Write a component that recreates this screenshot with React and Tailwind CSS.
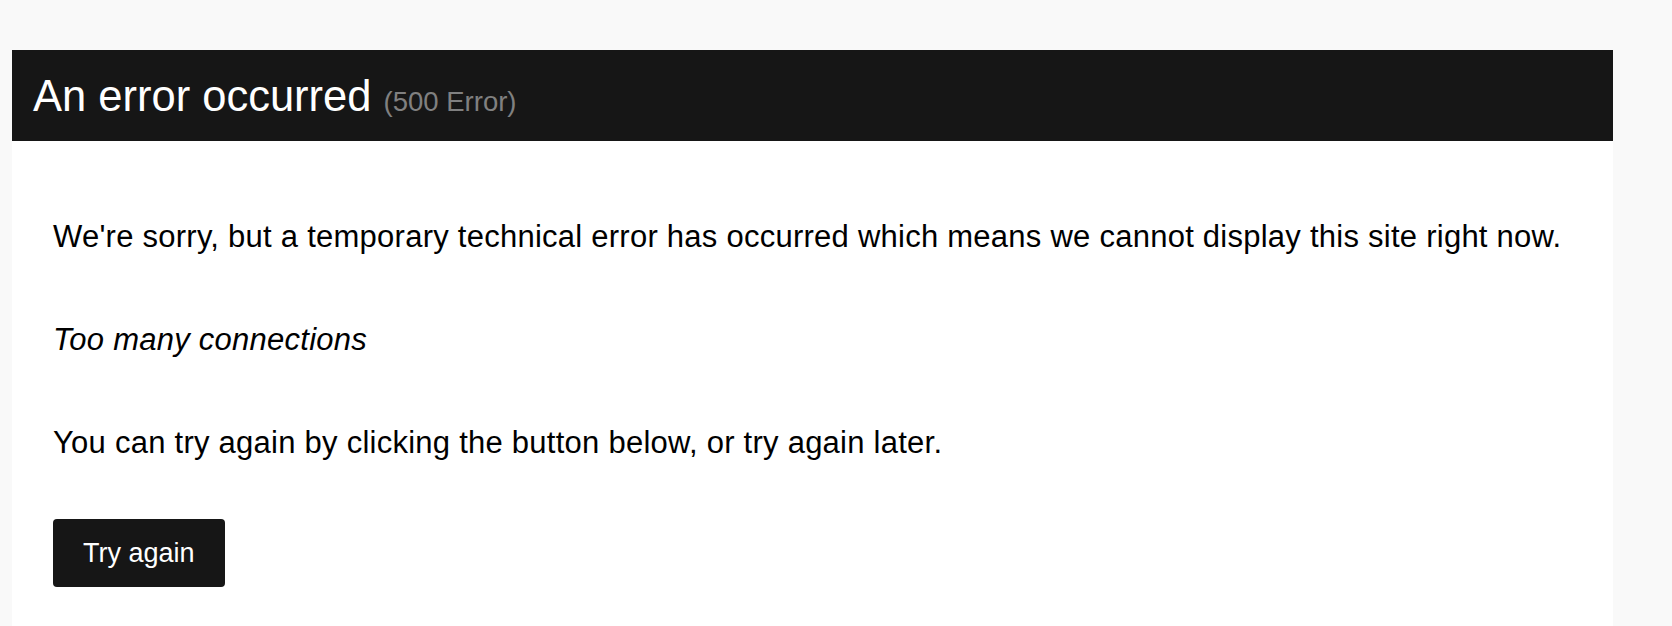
import React from "react";

const font = { fontFamily: '"Liberation Sans", Arial, sans-serif' };

export default function App() {
  return (
    <div className="min-h-[626px] bg-[#f9f9f9] pt-[50px] pl-[12px] pr-[59px]" style={font}>
      <div className="bg-white min-h-[600px]">
        <div className="bg-[#161616] h-[91px] pt-[22px] pl-[21px]">
          <h1 className="text-[43.5px] leading-[48px] text-white font-normal">
            An error occurred <span className="text-[27.5px] text-[#808080]">(500 Error)</span>
          </h1>
        </div>
        <div className="pl-[41px] pt-[76px] text-black text-[31px] leading-[40px] tracking-[0.25px]">
          <p>
            We're sorry, but a temporary technical error has occurred which means we cannot display this site right now.
          </p>
          <p className="mt-[63px] italic">Too many connections</p>
          <p className="mt-[63px]">You can try again by clicking the button below, or try again later.</p>
          <button className="mt-[56px] h-[68px] px-[30px] rounded-[4px] bg-[#161616] text-white text-[27px] tracking-normal">
            Try again
          </button>
        </div>
      </div>
    </div>
  );
}
